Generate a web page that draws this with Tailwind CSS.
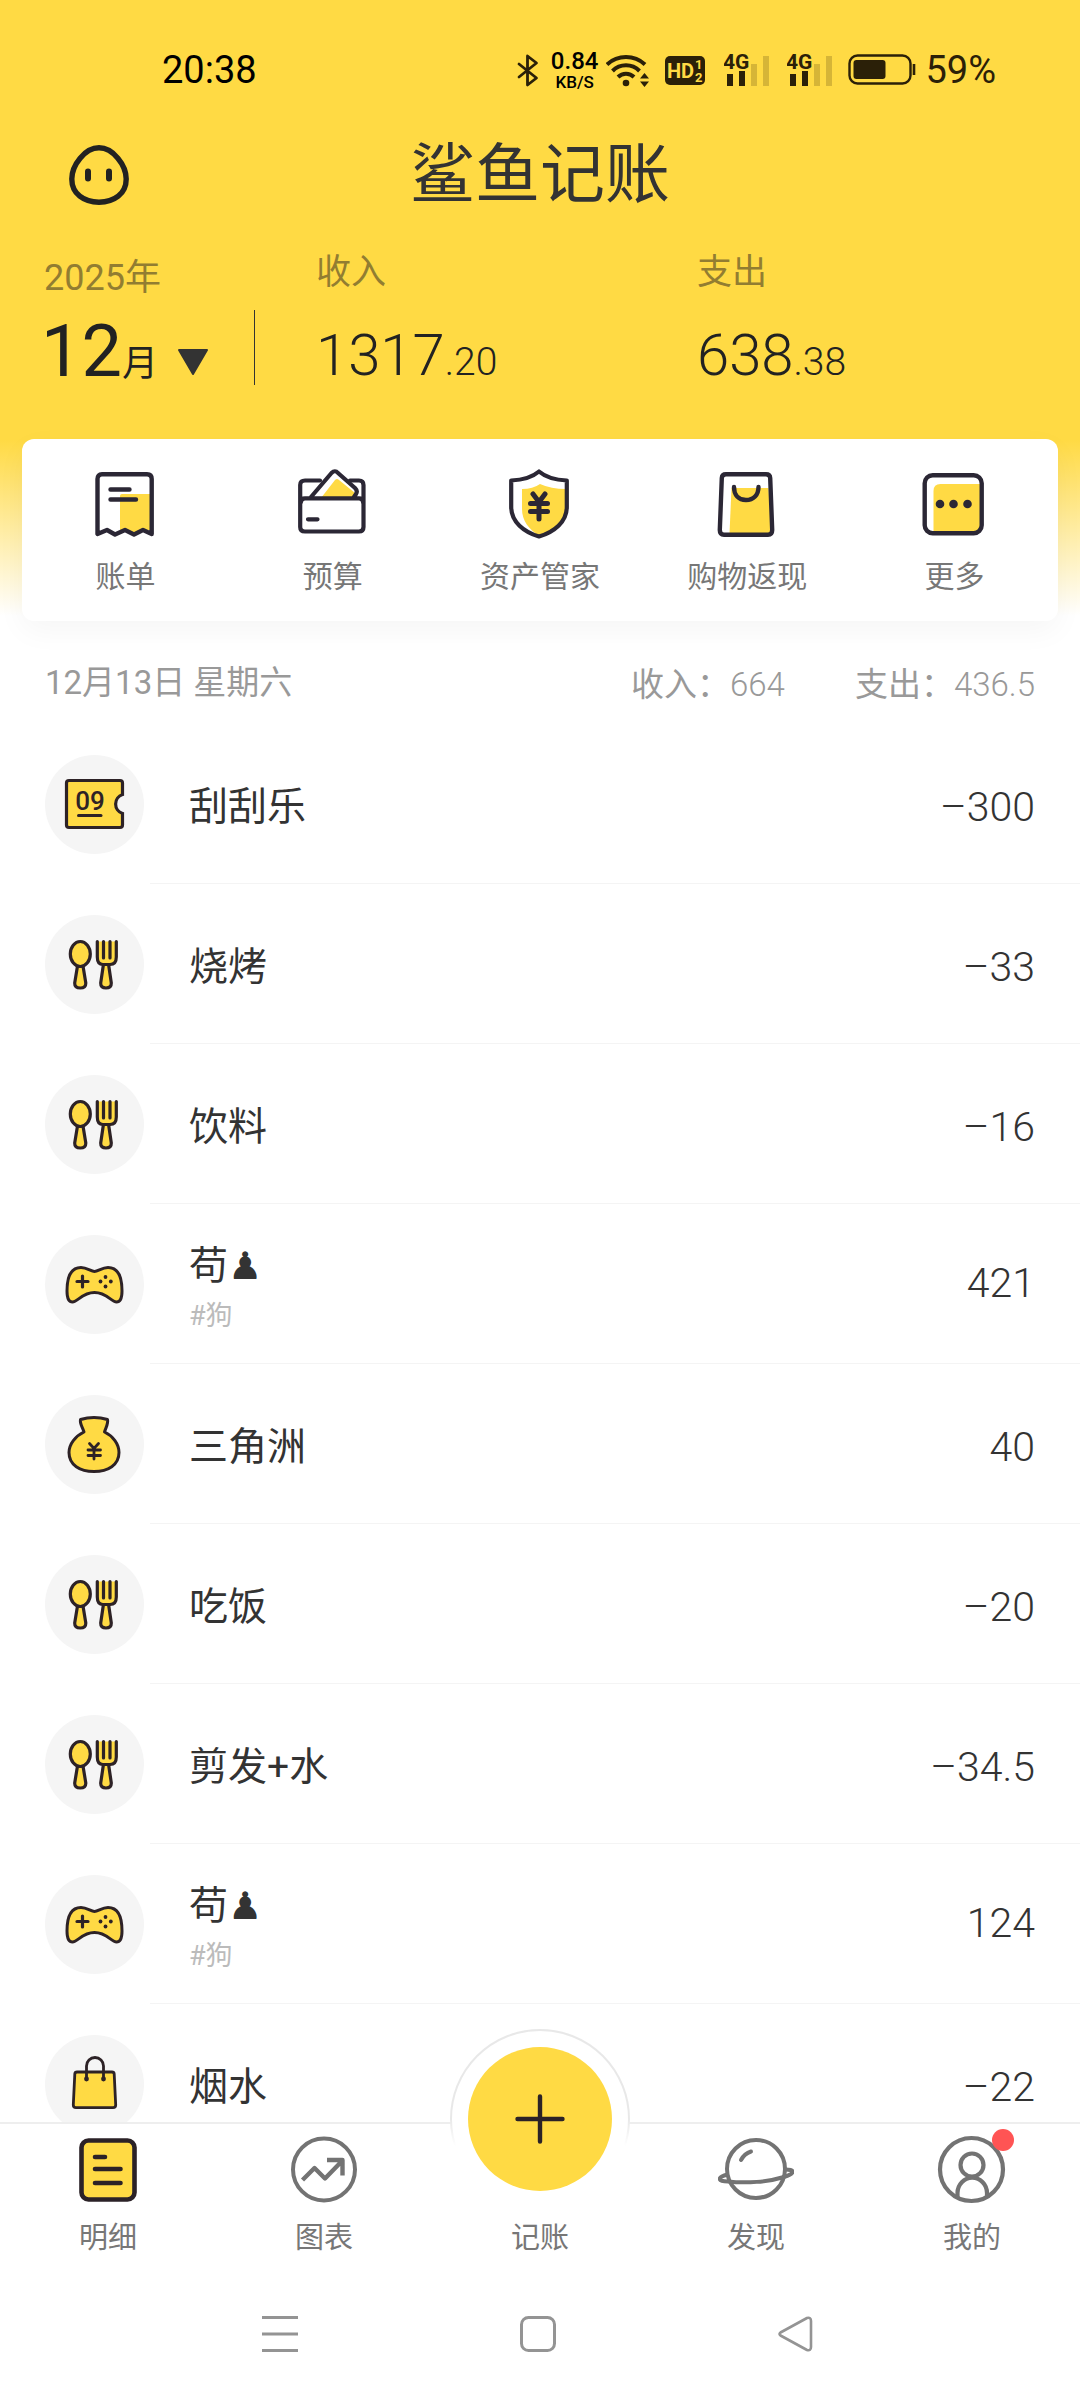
<!DOCTYPE html>
<html lang="zh-CN">
<head>
<meta charset="utf-8">
<meta name="viewport" content="width=device-width, initial-scale=1">
<title>鲨鱼记账</title>
<script src="https://cdn.jsdelivr.net/npm/@tailwindcss/browser@4"></script>
</head>
<body class="flex h-screen flex-col overflow-hidden bg-white font-[Roboto,'Noto_Sans_CJK_SC',sans-serif] text-[#333]">

<!-- shared category icons -->
<svg class="hidden" aria-hidden="true">
  <symbol id="ticket" viewBox="0 0 99 99">
    <path d="M24 25.500H75Q77.500 25.500 77.500 28V39.500A10 10 0 0 0 77.500 58.500V70Q77.500 72.500 75 72.500H24Q21.500 72.500 21.500 70V28Q21.500 25.500 24 25.500Z" fill="#ffda44" stroke="#2d2226" stroke-width="3.200"/>
    <text x="45" y="55" text-anchor="middle" font-family="Roboto" font-weight="500" font-size="26" fill="#2d2226">09</text>
    <path d="M33.500 60.500H56" stroke="#2d2226" stroke-width="3" stroke-linecap="round"/>
  </symbol>
  <symbol id="food" viewBox="0 0 99 99">
    <g fill="#ffda44" stroke="#2d2226" stroke-width="3.200" stroke-linejoin="round">
      <path d="M32.500 51H38L40.800 68Q41 73 35.300 73Q29.500 73 29.700 68Z"/>
      <ellipse cx="35.300" cy="39" rx="10" ry="12.500"/>
      <path d="M58.500 49H63.500L66.300 68Q66.500 73 61 73Q55.500 73 55.700 68Z"/>
      <path d="M52.300 26.500V42Q52.300 49.500 58 49.500H65Q71.300 49.500 71.300 42V26.500" stroke-linecap="round"/>
      <path d="M58.500 26.500V43M65 26.500V43" stroke-linecap="round"/>
    </g>
  </symbol>
  <symbol id="game" viewBox="0 0 99 99">
    <path d="M49.500 36.500C53 36.500 57 32.500 63 32.500C74 32.500 77 44 77 56C77 63 75 67 71.500 67C66 67 62 57.500 49.500 57.500C37 57.500 33 67 27.500 67C24 67 22 63 22 56C22 44 25 32.500 36 32.500C42 32.500 46 36.500 49.500 36.500Z" fill="#ffda44" stroke="#2d2226" stroke-width="3"/>
    <path d="M32 46.500H43M37.500 41V52" stroke="#2d2226" stroke-width="3.200" stroke-linecap="round"/>
    <g fill="#2d2226"><circle cx="60.500" cy="42" r="1.900"/><circle cx="60.500" cy="51.500" r="1.900"/><circle cx="55.500" cy="46.500" r="1.900"/><circle cx="65.800" cy="46.500" r="1.900"/></g>
  </symbol>
  <symbol id="money" viewBox="0 0 99 99">
    <path d="M39 37C37.500 32 34.500 28.500 35.500 24.500C44 22 54 22 62.500 24.500C63.500 28.500 61 32 59.500 37C68 41 74 49 74 57.500C74 70 63 76.500 49 76.500C35 76.500 24 70 24 57.500C24 49 30.500 41 39 37Z" fill="#ffda44" stroke="#2d2226" stroke-width="3" stroke-linejoin="round"/>
    <path d="M44.500 48.500L49 53.500L53.500 48.500M43 55H55.500M43 60.500H55.500M49 54V64" fill="none" stroke="#2d2226" stroke-width="2.800" stroke-linecap="round"/>
  </symbol>
  <symbol id="shopping" viewBox="0 0 99 99">
    <path d="M32 37H67Q69 37 69.200 39L70.700 70Q70.700 72.700 68 72.700H31Q28.300 72.700 28.300 70L29.800 39Q30 37 32 37Z" fill="#ffda44" stroke="#2d2226" stroke-width="2.800"/>
    <path d="M41.500 43.500V31A8.500 8.500 0 0 1 58.500 31V43.500" fill="none" stroke="#2d2226" stroke-width="2.800"/>
    <circle cx="41.500" cy="44" r="2.400" fill="#2d2226"/><circle cx="58.500" cy="44" r="2.400" fill="#2d2226"/>
  </symbol>
  <symbol id="signal" viewBox="0 0 46 34">
    <text x="-1" y="16" font-family="Roboto" font-weight="700" font-size="21" fill="#2b2008">4G</text>
    <path d="M6 21V33M18 18V33" stroke="#2b2008" stroke-width="6"/>
    <path d="M30 11V33M42 3V33" stroke="#d6b537" stroke-width="6"/>
  </symbol>
</svg>

<header class="shrink-0 bg-[linear-gradient(to_bottom,#ffda44_0,#ffda44_440px,#fff_616px)]">
  <!-- status bar -->
  <div class="flex h-[140px] items-center justify-between pr-[84px] pl-[162px] text-[#2b2008]">
    <time class="text-[38px] text-black">20:38</time>
    <div class="flex items-center">
      <svg class="mr-3 h-[33px] w-[22px]" viewBox="0 0 22 33" fill="none" stroke="#2b2008" stroke-width="2.800" stroke-linejoin="round" stroke-linecap="round"><path d="M2 10L19.500 24L10.500 31V2L19.500 9L2 23"/></svg>
      <div class="mr-2 text-center font-medium text-black">
        <div class="text-[24px] leading-[24px]">0.84</div>
        <div class="text-[17px] leading-[18px]">KB/S</div>
      </div>
      <svg class="mr-[15px] h-[33px] w-[44px]" viewBox="0 0 44 33"><g fill="none" stroke="#2b2008" stroke-width="4"><path d="M1 10.500A28 28 0 0 1 39 10.500"/><path d="M6.500 17A19 19 0 0 1 33.500 17"/><path d="M12 23A11.500 11.500 0 0 1 28 23"/></g><circle cx="20" cy="29" r="3.300" fill="#2b2008"/><path d="M34 24.500L38.500 19L43 24.500ZM34 27.500H43L38.500 33Z" fill="#2b2008"/></svg>
      <svg class="mr-[19px] h-[34px] w-[40px]" viewBox="0 0 40 34"><rect y="3" width="40" height="29" rx="5" fill="#2b2008"/><g font-family="Roboto" font-weight="700" fill="#ffda44"><text x="2" y="25" font-size="20">HD</text><text x="30" y="16" font-size="13">1</text><text x="30" y="29" font-size="13">2</text></g></svg>
      <svg class="mr-[17px] h-[34px] w-[46px]"><use href="#signal"/></svg>
      <svg class="mr-[15px] h-[34px] w-[46px]"><use href="#signal"/></svg>
      <svg class="mr-[9px] h-[32px] w-[68px]" viewBox="0 0 68 32"><rect x="1.500" y="1.500" width="61" height="28" rx="8" fill="none" stroke="#2b2008" stroke-width="2.400"/><rect x="5.500" y="6" width="32" height="19" rx="3" fill="#2b2008"/><path d="M66 10V21" stroke="#2b2008" stroke-width="2.600"/></svg>
      <span class="text-[38px]">59%</span>
    </div>
  </div>

  <!-- title -->
  <div class="grid grid-cols-[1fr_auto_1fr] items-center px-[69px]">
    <button type="button" aria-label="个人" class="size-[60px]">
      <svg class="size-[60px]" viewBox="0 0 60 60"><path d="M30 2.800C44 2.800 57.200 20 57.200 34C57.200 49 45 57.200 30 57.200C15 57.200 2.800 49 2.800 34C2.800 20 16 2.800 30 2.800Z" fill="none" stroke="#222" stroke-width="5.400"/><path d="M19 26.500V33.500M40 26.500V33.500" stroke="#222" stroke-width="6" stroke-linecap="round"/></svg>
    </button>
    <h1 class="text-[65px] leading-[70px]">鲨鱼记账</h1>
  </div>

  <!-- month summary -->
  <section class="grid h-[229px] grid-cols-[255px_442px_1fr]">
    <div class="relative pt-[48px] pl-[44px]">
      <div class="text-[36px] leading-10 text-[#927d31]">2025年</div>
      <button type="button" class="-ml-[3px] mt-3 flex items-baseline text-[#222]">
        <span class="text-[72px] leading-[84px]">12</span><span class="text-[36px]">月</span>
        <svg class="ml-[19px] h-[28px] w-[32px]" viewBox="0 0 32 28"><path d="M2 2H30L16 26Z" fill="#333" stroke="#333" stroke-width="2" stroke-linejoin="round"/></svg>
      </button>
      <span class="absolute top-[100px] right-0 h-[75px] w-px bg-[#333]"></span>
    </div>
    <div class="pt-[43px] pl-[61px]">
      <div class="text-[35px] leading-10 text-[#927d31]">收入</div>
      <div class="mt-[21px] text-[58px] leading-[82px] font-light text-[#222]">1317<span class="text-[39px]">.20</span></div>
    </div>
    <div class="pt-[43px]">
      <div class="text-[35px] leading-10 text-[#927d31]">支出</div>
      <div class="mt-[21px] text-[58px] leading-[82px] font-light text-[#222]">638<span class="text-[39px]">.38</span></div>
    </div>
  </section>

  <!-- shortcuts -->
  <nav class="mx-[22px] grid grid-cols-5 rounded-xl bg-white pt-[26px] pb-[22px] text-[30px] leading-[44px] text-[#777] shadow-[0_10px_30px_rgba(0,0,0,0.04)]">
    <a href="#bill" class="flex flex-col items-center gap-3">
      <svg class="h-[78px] w-[80px]" viewBox="-9 -7 80 78" fill="none" stroke="#2b2735" stroke-width="4.400" stroke-linejoin="round" stroke-linecap="round"><path d="M25 24Q25 22 27 22H55V58H48L38 61L30 57L25 59Z" fill="#ffda44" stroke="none"/><path d="M2.500 62V7Q2.500 2.200 7 2.200H52Q56.700 2.200 56.700 7V62L48 58L39 62.500L30 58L20 62.500L12 58Z"/><path d="M15.500 17.500H34.500M15.500 27.500H41"/></svg>
      账单
    </a>
    <a href="#budget" class="flex flex-col items-center gap-3">
      <svg class="h-[78px] w-[80px]" viewBox="-5 -4 80 78" fill="none" stroke="#2b2735" stroke-width="4.200" stroke-linejoin="round" stroke-linecap="round"><path d="M22 11.500H7Q2.200 11.500 2.200 16V58Q2.200 62.500 7 62.500H61Q65.500 62.500 65.500 58V16Q65.500 11.500 61 11.500H52"/><path d="M23 29L37 11Q39 9 41 11L57 24L56 29Z" fill="#ffda44" stroke="none"/><path d="M13 28L33.500 4Q37 .500 40 4L57 19Q60 22 58 25L56 28M3 33Q3 29.300 7 29.300H61Q65 29.300 65 33M10 50.300H19.500"/></svg>
      预算
    </a>
    <a href="#assets" class="flex flex-col items-center gap-3">
      <svg class="h-[78px] w-[80px]" viewBox="-9 -4 80 78" fill="none" stroke="#2b2735" stroke-width="4.200" stroke-linejoin="round" stroke-linecap="round"><path d="M13 20Q24 20 31 15Q42 20 57 20V37C57 52 44 62 30 67C20 60 13 52 13 40Z" fill="#ffda44" stroke="none"/><path d="M30 2.500C23 8.500 14 11 2.200 11.500V38C2.200 53 15 63 30 67.500C45 63 57.800 53 57.800 38V11.500C46 11 37 8.500 30 2.500Z"/><path d="M24 25L30 33L36 25M21.500 34.500H38.500M21.500 42.500H38.500M30 34V50" stroke-width="5"/></svg>
      资产管家
    </a>
    <a href="#cashback" class="flex flex-col items-center gap-3">
      <svg class="h-[78px] w-[80px]" viewBox="-10.500 -7 80 78" fill="none" stroke="#2b2735" stroke-width="4.400" stroke-linejoin="round" stroke-linecap="round"><path d="M14 16H51L54 62H12Z" fill="#ffda44" stroke="none"/><path d="M8.500 2.200H48.500Q52.500 2.200 52.700 6L54.700 58Q54.700 62.700 50.500 62.700H6.500Q2.300 62.700 2.300 58L4.300 6Q4.500 2.200 8.500 2.200Z"/><path d="M16.500 15C16.500 23 21 28 28.500 28C36 28 41 23 41 15"/></svg>
      购物返现
    </a>
    <a href="#more" class="flex flex-col items-center gap-3">
      <svg class="h-[78px] w-[80px]" viewBox="-8.500 -8 80 78"><path d="M11 18Q11 11 18 11H58V59H11Z" fill="#ffda44"/><rect x="2.200" y="2.200" width="57" height="58" rx="8" fill="none" stroke="#2b2735" stroke-width="4.400"/><g fill="#2b2735"><circle cx="17.500" cy="31" r="4.300"/><circle cx="31" cy="31" r="4.300"/><circle cx="45" cy="31" r="4.300"/></g></svg>
      更多
    </a>
  </nav>
</header>

<main class="min-h-0 flex-1 overflow-hidden">
  <div class="flex h-[103px] items-center justify-between pt-5 pr-[45px] pl-[45px] text-[33px] text-[#999]">
    <h2>12月13日 星期六</h2>
    <p class="flex gap-[70px] pt-1"><span>收入：<span class="font-light">664</span></span><span>支出：<span class="font-light">436.5</span></span></p>
  </div>
  <ul class="text-[39px]">
    <li class="flex h-40 items-center pl-[45px]"><span class="size-[99px] shrink-0 rounded-full bg-[#f5f5f5]"><svg class="size-[99px]"><use href="#ticket"/></svg></span><div class="ml-1.5 flex h-40 flex-1 items-center justify-between border-b border-[#f4f4f4] pr-[45px] pl-[39px]"><span class="pt-2">刮刮乐</span><span class="pt-2 text-[41px] font-light">–300</span></div></li>
    <li class="flex h-40 items-center pl-[45px]"><span class="size-[99px] shrink-0 rounded-full bg-[#f5f5f5]"><svg class="size-[99px]"><use href="#food"/></svg></span><div class="ml-1.5 flex h-40 flex-1 items-center justify-between border-b border-[#f4f4f4] pr-[45px] pl-[39px]"><span class="pt-2">烧烤</span><span class="pt-2 text-[41px] font-light">–33</span></div></li>
    <li class="flex h-40 items-center pl-[45px]"><span class="size-[99px] shrink-0 rounded-full bg-[#f5f5f5]"><svg class="size-[99px]"><use href="#food"/></svg></span><div class="ml-1.5 flex h-40 flex-1 items-center justify-between border-b border-[#f4f4f4] pr-[45px] pl-[39px]"><span class="pt-2">饮料</span><span class="pt-2 text-[41px] font-light">–16</span></div></li>
    <li class="flex h-40 items-center pl-[45px]"><span class="size-[99px] shrink-0 rounded-full bg-[#f5f5f5]"><svg class="size-[99px]"><use href="#game"/></svg></span><div class="ml-1.5 flex h-40 flex-1 items-center justify-between border-b border-[#f4f4f4] pr-[45px] pl-[39px]"><div class="pt-2"><div class="leading-[56px]">苟<span class="font-['DejaVu_Sans'] text-[38px]">♟</span></div><div class="text-[27px] leading-[44px] text-[#bbb]">#狗</div></div><span class="text-[41px] font-light">421</span></div></li>
    <li class="flex h-40 items-center pl-[45px]"><span class="size-[99px] shrink-0 rounded-full bg-[#f5f5f5]"><svg class="size-[99px]"><use href="#money"/></svg></span><div class="ml-1.5 flex h-40 flex-1 items-center justify-between border-b border-[#f4f4f4] pr-[45px] pl-[39px]"><span class="pt-2">三角洲</span><span class="pt-2 text-[41px] font-light">40</span></div></li>
    <li class="flex h-40 items-center pl-[45px]"><span class="size-[99px] shrink-0 rounded-full bg-[#f5f5f5]"><svg class="size-[99px]"><use href="#food"/></svg></span><div class="ml-1.5 flex h-40 flex-1 items-center justify-between border-b border-[#f4f4f4] pr-[45px] pl-[39px]"><span class="pt-2">吃饭</span><span class="pt-2 text-[41px] font-light">–20</span></div></li>
    <li class="flex h-40 items-center pl-[45px]"><span class="size-[99px] shrink-0 rounded-full bg-[#f5f5f5]"><svg class="size-[99px]"><use href="#food"/></svg></span><div class="ml-1.5 flex h-40 flex-1 items-center justify-between border-b border-[#f4f4f4] pr-[45px] pl-[39px]"><span class="pt-2">剪发+水</span><span class="pt-2 text-[41px] font-light">–34.5</span></div></li>
    <li class="flex h-40 items-center pl-[45px]"><span class="size-[99px] shrink-0 rounded-full bg-[#f5f5f5]"><svg class="size-[99px]"><use href="#game"/></svg></span><div class="ml-1.5 flex h-40 flex-1 items-center justify-between border-b border-[#f4f4f4] pr-[45px] pl-[39px]"><div class="pt-2"><div class="leading-[56px]">苟<span class="font-['DejaVu_Sans'] text-[38px]">♟</span></div><div class="text-[27px] leading-[44px] text-[#bbb]">#狗</div></div><span class="text-[41px] font-light">124</span></div></li>
    <li class="flex h-40 items-center pl-[45px]"><span class="size-[99px] shrink-0 rounded-full bg-[#f5f5f5]"><svg class="size-[99px]"><use href="#shopping"/></svg></span><div class="ml-1.5 flex h-40 flex-1 items-center justify-between border-b border-[#f4f4f4] pr-[45px] pl-[39px]"><span class="pt-2">烟水</span><span class="pt-2 text-[41px] font-light">–22</span></div></li>
  </ul>
</main>

<footer class="relative shrink-0 border-t-2 border-[#eee] bg-white">
  <!-- tab bar -->
  <nav class="grid grid-cols-5 pt-2 text-[29px] leading-[40px] text-[#777]">
    <a href="#detail" aria-current="page" class="flex flex-col items-center gap-2.5">
      <svg class="size-[76px]" viewBox="-9 -6 76 76"><rect x="2.500" y="2.500" width="53" height="59" rx="7" fill="#ffda44" stroke="#2b2227" stroke-width="4.600"/><path d="M16 19H26M16 31H41.500M16 45H41.500" stroke="#2b2227" stroke-width="4.600" stroke-linecap="round"/></svg>
      明细
    </a>
    <a href="#chart" class="flex flex-col items-center gap-2.5">
      <svg class="size-[76px]" viewBox="-5 -5 76 76" fill="none" stroke="#737373" stroke-width="4"><circle cx="33" cy="32.500" r="31"/><path d="M11.500 43L23.500 31L34 41.500L51 24M36 23H51.500V38.500" stroke-width="4.400" stroke-linejoin="round"/></svg>
      图表
    </a>
    <a href="#add" class="relative flex flex-col items-center gap-2.5">
      <!-- raised add button with its fading ring -->
      <svg class="absolute top-[-105px] left-1/2 h-[184px] w-[184px] -translate-x-1/2" viewBox="-92 -92 184 184">
        <defs><linearGradient id="ring" gradientUnits="userSpaceOnUse" x1="0" y1="0" x2="0" y2="27"><stop offset="0" stop-color="#e8e8e8"/><stop offset="1" stop-color="#fff"/></linearGradient></defs>
        <circle r="89" fill="#fff" stroke="url(#ring)" stroke-width="2"/>
        <circle r="72" fill="#ffda44"/>
        <path d="M-22.500 0H22.500M0 -22.500V22.500" stroke="#2b2227" stroke-width="4.400" stroke-linecap="round"/>
      </svg>
      <span class="size-[76px]"></span>
      <span class="relative">记账</span>
    </a>
    <a href="#discover" class="flex flex-col items-center gap-2.5">
      <svg class="size-[76px]" viewBox="0 -6 76 76" fill="none" stroke="#737373" stroke-width="4"><circle cx="38" cy="31" r="29"/><path d="M23 22Q26.500 15.500 33 13.500" stroke-linecap="round"/><path d="M9.500 36.500C-1 39 -1 43.500 10 43.500C28 45.500 50 44 66 39C78 35.500 77 31 66 31.500"/></svg>
      发现
    </a>
    <a href="#me" class="flex flex-col items-center gap-2.5">
      <span class="relative">
        <svg class="size-[76px]" viewBox="-4 -4 76 76" fill="none" stroke="#737373" stroke-width="4.200"><circle cx="33.500" cy="33.500" r="31.500"/><circle cx="34" cy="29" r="11.500"/><path d="M19.500 62V57A14.500 15 0 0 1 49 57V62"/></svg>
        <span class="absolute top-[-3px] right-[-4px] size-[22px] rounded-full bg-[#ff5454]"></span>
      </span>
      我的
    </a>
  </nav>

  <!-- system navigation -->
  <div class="flex h-[142px] items-center justify-center gap-[218px] pt-[10px] pr-1">
    <button type="button" aria-label="最近任务"><svg class="size-10" viewBox="0 0 40 40"><path d="M2 3.500H38M2 20H38M2 36.500H38" stroke="#949494" stroke-width="3"/></svg></button>
    <button type="button" aria-label="主屏幕"><svg class="size-10" viewBox="0 0 40 40"><rect x="3.500" y="3.500" width="33" height="33" rx="7" fill="none" stroke="#949494" stroke-width="3"/></svg></button>
    <button type="button" aria-label="返回"><svg class="size-10" viewBox="0 0 40 40"><path d="M4.500 18.500Q2.500 20 4.500 21.500L31 36Q35 37 35 33V7Q35 3 31 4Z" fill="none" stroke="#949494" stroke-width="2.600" stroke-linejoin="round"/></svg></button>
  </div>
</footer>
</body>
</html>
